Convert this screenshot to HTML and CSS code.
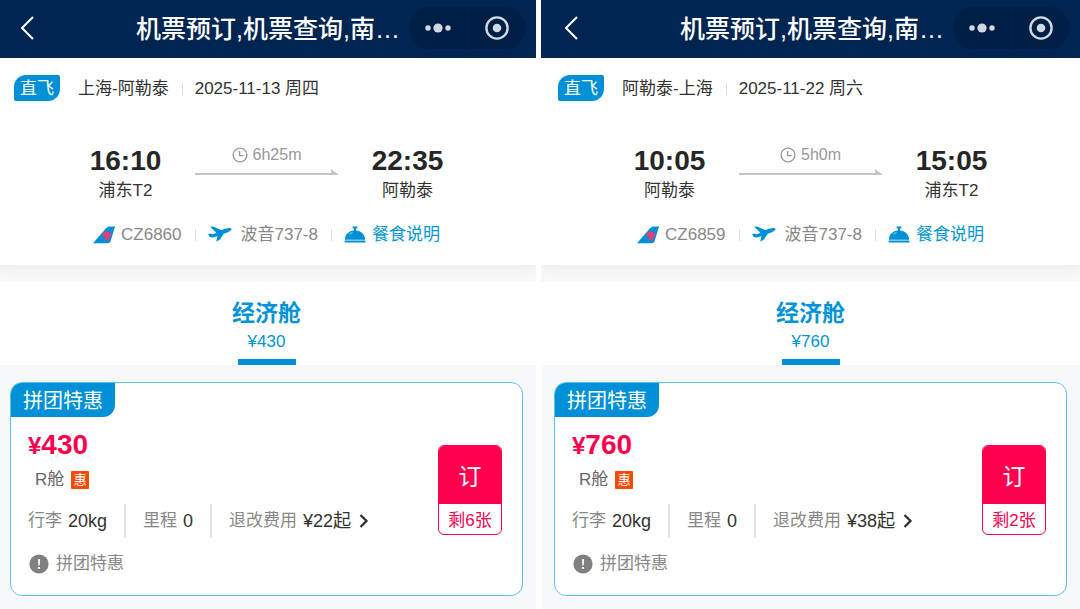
FILE: index.html
```html
<!DOCTYPE html>
<html lang="zh-CN">
<head>
  <meta charset="UTF-8" />
  <meta name="viewport" content="width=device-width, initial-scale=1.0">
  <title>机票预订</title>
  <link rel="stylesheet" href="styles.css">
</head>
<body>
<!-- shared icons -->
<svg class="sprite" aria-hidden="true">
  <symbol id="back" viewBox="0 0 14 24"><path d="M13 1L2 12l11 11" fill="none" stroke="#fff" stroke-width="2"/></symbol>
  <symbol id="dots" viewBox="0 0 26 10"><g fill="#d3d9e2"><circle cx="3" cy="5" r="2.7"/><circle cx="13" cy="5" r="4.6"/><circle cx="23" cy="5" r="2.7"/></g></symbol>
  <symbol id="target" viewBox="0 0 24 24"><circle cx="12" cy="12" r="10.6" fill="none" stroke="#d3d9e2" stroke-width="2.4"/><circle cx="12" cy="12" r="4.3" fill="#d3d9e2"/></symbol>
  <symbol id="clock" viewBox="0 0 16 16"><g fill="none" stroke="#999" stroke-width="1.4"><circle cx="8" cy="8" r="6.9"/><path d="M7.600 4v4.600h3.800"/></g></symbol>
  <symbol id="arrow" viewBox="0 0 144 6"><path d="M0 4h136V0l8 6H0z" fill="#c4c4c4"/></symbol>
  <symbol id="tail" viewBox="0 0 22 18"><path d="M0 17.300L13 2.200Q14.500.5 16.500.5H22l-4.500 15q-.6 1.800-2.500 1.800z" fill="#0090d7"/><path d="M9.300 8l2.200-1.200.8-1.500 1.400.8 1.500-.8 1 1.600 2.300.6-.6 2.500-1.700.5-.4 3.500-1.700 1.200-1.900-1.200v-3.200l-2.500-.4z" fill="#f5376f"/></symbol>
  <symbol id="plane" viewBox="0 0 24 18"><path d="M2.200.8L5 .6l8.200 3.300 5-1.300q4.300-1.200 5.500.3-.7 2-4.500 3.500l-3.400 1.400-3.800 5.600-3.800 2.400 1.300-5.500-5.200 1.100-2.600-.3L.2 8.200l1.300-.6 3.400.7 3.500-1.600z" fill="#0090d7"/></symbol>
  <symbol id="cloche" viewBox="0 0 22 18"><path d="M8.600.4h4.800v2H12v2c5 .4 9.200 3.900 9.200 9.400H.8c0-5.500 4.200-9 9.200-9.400v-2H8.600zM.6 14.400h20.800v2.200H.6z" fill="#0090d7"/><path d="M5.500 8.300q1.400-1.400 3-1.900" fill="none" stroke="#bfe3f5" stroke-width=".8"/></symbol>
  <symbol id="more" viewBox="0 0 10 14"><path d="M1.500 1l6 6-6 6" fill="none" stroke="#333" stroke-width="2.3"/></symbol>
  <symbol id="note" viewBox="0 0 20 20"><circle cx="10" cy="10" r="9.600" fill="#808080"/><path d="M9 5h2l-.3 6.500H9.300zM9 13h2v2H9z" fill="#fff"/></symbol>
</svg>

<main class="flights">
  <section class="panel">
    <header class="navbar">
      <button class="back-btn" aria-label="返回"><svg width="14" height="24"><use href="#back"/></svg></button>
      <h1>机票预订,机票查询,南…</h1>
      <div class="capsule">
        <button aria-label="更多"><svg width="26" height="10"><use href="#dots"/></svg></button>
        <button aria-label="关闭"><svg width="24" height="24"><use href="#target"/></svg></button>
      </div>
    </header>
    <div class="flight">
      <div class="trip">
        <span class="direct">直飞</span>
        <span class="cities">上海-阿勒泰</span>
        <span class="date">2025-11-13 周四</span>
      </div>
      <div class="route">
        <div class="place"><strong>16:10</strong><span>浦东T2</span></div>
        <div class="duration">
          <span><svg width="16" height="16"><use href="#clock"/></svg>6h25m</span>
          <svg class="arrow" width="144" height="6"><use href="#arrow"/></svg>
        </div>
        <div class="place"><strong>22:35</strong><span>阿勒泰</span></div>
      </div>
      <div class="info">
        <span class="airline"><svg width="22" height="18"><use href="#tail"/></svg>CZ6860</span>
        <span class="aircraft"><svg width="24" height="18"><use href="#plane"/></svg>波音737-8</span>
        <a class="meal" href="#"><svg width="22" height="18"><use href="#cloche"/></svg>餐食说明</a>
      </div>
    </div>
    <nav class="cabins">
      <button class="cabin"><strong>经济舱</strong><span>¥430</span></button>
    </nav>
    <article class="fare">
      <span class="fare-tag">拼团特惠</span>
      <div class="fare-body">
        <div class="fare-info">
          <div class="price"><small>¥</small>430</div>
          <div class="class">R舱 <span class="deal">惠</span></div>
          <div class="details">
            <span>行李 <b>20kg</b></span>
            <span>里程 <b>0</b></span>
            <a href="#">退改费用 <b>¥22起</b><svg width="10" height="14"><use href="#more"/></svg></a>
          </div>
          <div class="remark"><svg width="20" height="20"><use href="#note"/></svg>拼团特惠</div>
        </div>
        <button class="book-btn"><span class="book">订</span><span class="left">剩6张</span></button>
      </div>
    </article>
  </section>

  <section class="panel">
    <header class="navbar">
      <button class="back-btn" aria-label="返回"><svg width="14" height="24"><use href="#back"/></svg></button>
      <h1>机票预订,机票查询,南…</h1>
      <div class="capsule">
        <button aria-label="更多"><svg width="26" height="10"><use href="#dots"/></svg></button>
        <button aria-label="关闭"><svg width="24" height="24"><use href="#target"/></svg></button>
      </div>
    </header>
    <div class="flight">
      <div class="trip">
        <span class="direct">直飞</span>
        <span class="cities">阿勒泰-上海</span>
        <span class="date">2025-11-22 周六</span>
      </div>
      <div class="route">
        <div class="place"><strong>10:05</strong><span>阿勒泰</span></div>
        <div class="duration">
          <span><svg width="16" height="16"><use href="#clock"/></svg>5h0m</span>
          <svg class="arrow" width="144" height="6"><use href="#arrow"/></svg>
        </div>
        <div class="place"><strong>15:05</strong><span>浦东T2</span></div>
      </div>
      <div class="info">
        <span class="airline"><svg width="22" height="18"><use href="#tail"/></svg>CZ6859</span>
        <span class="aircraft"><svg width="24" height="18"><use href="#plane"/></svg>波音737-8</span>
        <a class="meal" href="#"><svg width="22" height="18"><use href="#cloche"/></svg>餐食说明</a>
      </div>
    </div>
    <nav class="cabins">
      <button class="cabin"><strong>经济舱</strong><span>¥760</span></button>
    </nav>
    <article class="fare">
      <span class="fare-tag">拼团特惠</span>
      <div class="fare-body">
        <div class="fare-info">
          <div class="price"><small>¥</small>760</div>
          <div class="class">R舱 <span class="deal">惠</span></div>
          <div class="details">
            <span>行李 <b>20kg</b></span>
            <span>里程 <b>0</b></span>
            <a href="#">退改费用 <b>¥38起</b><svg width="10" height="14"><use href="#more"/></svg></a>
          </div>
          <div class="remark"><svg width="20" height="20"><use href="#note"/></svg>拼团特惠</div>
        </div>
        <button class="book-btn"><span class="book">订</span><span class="left">剩2张</span></button>
      </div>
    </article>
  </section>
</main>
</body>
</html>
```
FILE: styles.css
```css
* {
  box-sizing: border-box;
}
body {
  font-family: "Liberation Sans", "Noto Sans CJK SC", sans-serif;
  font-size: 17px;
  line-height: 24px;
  margin: 0;
  background: #fff;
  color: #333;
  overflow-x: hidden;
}
button {
  font: inherit;
  color: inherit;
  background: none;
  border: none;
  padding: 0;
  cursor: pointer;
}
a {
  color: inherit;
  text-decoration: none;
}
svg {
  display: block;
  flex: none;
}
.sprite {
  width: 0;
  height: 0;
  position: absolute;
}
.flights {
  display: grid;
  grid-template-columns: 1fr 1fr;
  gap: 5px;
  margin-left: -3px;
  min-height: 100vh;
}
.panel {
  background: #f7f8fc;
  padding-bottom: 13px;
  overflow: hidden;
}
.navbar {
  display: flex;
  align-items: center;
  height: 58px;
  padding: 0 10px 2px 23px;
  background: #002552;
  color: #fff;
}
.back-btn {
  width: 116px;
}
.navbar h1 {
  flex: 1;
  margin: 0;
  padding-top: 2px;
  font-size: 25px;
  font-weight: 500;
  line-height: 32px;
  white-space: nowrap;
}
.capsule {
  display: flex;
  width: 117px;
  height: 42px;
  border-radius: 21px;
  background: #001f46;
}
.capsule button {
  flex: 1;
  display: flex;
  align-items: center;
  justify-content: center;
}
.capsule button + button {
  border-left: 1px solid #00234d;
}
.flight {
  background: #fff;
  height: 207px;
  padding: 17px;
  box-shadow: 0 2px 12px rgba(0,0,0,0.06);
}
.trip {
  display: flex;
  align-items: center;
  height: 26px;
  line-height: 26px;
}
.direct {
  width: 46px;
  height: 26px;
  line-height: 28px;
  text-align: center;
  background: #0090d7;
  color: #fff;
  border-radius: 12px 2px 12px 2px;
  margin-right: 18px;
}
.cities, .date {
  padding-top: 2px;
}
.date::before, .aircraft::before, .meal::before {
  content: "";
  width: 1px;
  height: 12px;
  background: #ddd;
  margin: 0 12px 0 13px;
}
.date {
  display: flex;
  align-items: center;
}
.route {
  display: flex;
  justify-content: center;
  gap: 33px;
  margin-top: 42px;
}
.place {
  display: flex;
  flex-direction: column;
  align-items: center;
  width: 72px;
}
.place strong {
  font-size: 28px;
  line-height: 36px;
  color: #262626;
}
.duration {
  display: flex;
  flex-direction: column;
  align-items: center;
  color: #999;
  font-size: 16px;
}
.duration span {
  display: flex;
  align-items: center;
  gap: 5px;
}
.arrow {
  margin-top: 2px;
}
.info {
  display: flex;
  justify-content: center;
  margin-top: 20px;
  color: #888;
}
.info > * {
  display: flex;
  align-items: center;
}
.airline svg, .meal svg {
  margin-right: 6px;
}
.aircraft svg {
  margin-right: 9px;
}
.meal {
  color: #0099d9;
}
.cabins {
  display: flex;
  justify-content: center;
  margin-top: 17px;
  background: #fff;
  position: relative;
}
.cabin {
  display: flex;
  flex-direction: column;
  align-items: center;
  color: #0094d6;
  padding-top: 15px;
}
.cabin strong {
  font-size: 23px;
  line-height: 33px;
}
.cabin::after {
  content: "";
  width: 58px;
  height: 6px;
  margin-top: 5px;
  background: #0090d7;
}
.fare {
  margin: 17px 13px 0;
  background: #fff;
  border: 1px solid #5cc3e8;
  border-radius: 12px;
  overflow: hidden;
}
.fare-tag {
  display: block;
  width: 104px;
  height: 34px;
  background: #0090d7;
  color: #fff;
  font-size: 20px;
  line-height: 36px;
  text-align: center;
  border-radius: 0 0 12px 0;
}
.fare-body {
  display: flex;
  justify-content: space-between;
  align-items: flex-start;
  padding: 12px 20px 19px 17px;
}
.price {
  font-size: 28px;
  font-weight: bold;
  line-height: 32px;
  color: #ff004f;
}
.price small {
  font-size: 24px;
}
.class {
  display: flex;
  align-items: center;
  gap: 7px;
  padding-left: 7px;
  margin-top: 6px;
  color: #666;
}
.deal {
  width: 18px;
  background: #ff4800;
  color: #fff;
  font-size: 13px;
  line-height: 18px;
  text-align: center;
  border-radius: 1px;
}
.details {
  display: flex;
  margin-top: 12px;
  line-height: 34px;
  color: #888;
  white-space: nowrap;
}
.details > * {
  display: flex;
  align-items: center;
  gap: 6px;
}
.details > * + * {
  border-left: 2px solid #e3e3e3;
  margin-left: 17px;
  padding-left: 17px;
}
.details b {
  font-size: 18px;
  font-weight: 400;
  color: #333;
}
.details svg {
  margin-left: 2px;
}
.remark {
  display: flex;
  align-items: center;
  gap: 7px;
  margin-top: 14px;
  padding-left: 1px;
  color: #888;
}
.book-btn {
  display: flex;
  flex-direction: column;
  width: 64px;
  margin-top: 16px;
  border: 1px solid #ff004f;
  border-radius: 6px;
  overflow: hidden;
  color: #ff004f;
}
.book-btn span {
  width: 100%;
}
.book {
  background: #ff004f;
  color: #fff;
  font-size: 23px;
  height: 58px;
  line-height: 62px;
}
.left {
  height: 30px;
  line-height: 33px;
}
```
